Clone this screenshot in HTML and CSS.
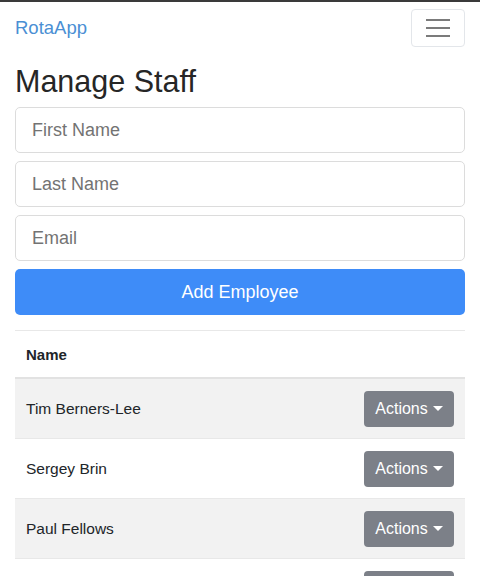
FILE: index.html
```html
<!DOCTYPE html>
<html lang="en">
<head>
<meta charset="utf-8">
<title>RotaApp</title>
<link rel="stylesheet" href="styles.css">
</head>
<body>
<nav class="navbar">
  <a class="brand" href="#">RotaApp</a>
  <button class="toggler" type="button" aria-label="Toggle navigation">
    <svg width="26" height="20" viewBox="0 0 26 20"><g stroke="#7b7b7b" stroke-width="2"><line x1="1" y1="2" x2="25" y2="2"/><line x1="1" y1="10" x2="25" y2="10"/><line x1="1" y1="18" x2="25" y2="18"/></g></svg>
  </button>
</nav>
<main class="container">
  <h1 class="title">Manage Staff</h1>
  <form class="form">
    <input class="field" type="text" placeholder="First Name">
    <input class="field" type="text" placeholder="Last Name">
    <input class="field" type="email" placeholder="Email">
    <button class="btn-primary" type="button">Add Employee</button>
  </form>
  <table class="table">
    <thead>
      <tr><th>Name</th><th></th></tr>
    </thead>
    <tbody>
      <tr class="odd"><td>Tim Berners-Lee</td><td class="act"><button class="btn-actions" type="button">Actions<span class="caret"></span></button></td></tr>
      <tr><td>Sergey Brin</td><td class="act"><button class="btn-actions" type="button">Actions<span class="caret"></span></button></td></tr>
      <tr class="odd"><td>Paul Fellows</td><td class="act"><button class="btn-actions" type="button">Actions<span class="caret"></span></button></td></tr>
      <tr><td>Larry Page</td><td class="act"><button class="btn-actions" type="button">Actions<span class="caret"></span></button></td></tr>
    </tbody>
  </table>
</main>
</body>
</html>
```
FILE: styles.css
```css
html, body {
  margin: 0;
  padding: 0;
  background: #fff;
}
body {
  font-family: "Liberation Sans", Arial, sans-serif;
  color: #212529;
  border-top: 2px solid #3a3a3a;
  height: 574px;
  overflow: hidden;
}
.navbar {
  display: flex;
  align-items: center;
  justify-content: space-between;
  padding: 7px 15px 8px 15px;
}
.brand {
  color: #4a8fd4;
  font-size: 18.5px;
  text-decoration: none;
}
.toggler {
  width: 54px;
  height: 38px;
  background: #fff;
  border: 1px solid #e3e6ea;
  border-radius: 4px;
  display: flex;
  align-items: center;
  justify-content: center;
  padding: 0;
}
.container {
  padding: 0 15px;
}
.title {
  font-size: 30.5px;
  font-weight: 400;
  line-height: 36px;
  margin: 8px 0 8px 0;
  color: #262626;
}
.form {
  display: flex;
  flex-direction: column;
  gap: 8px;
}
.field {
  height: 46px;
  box-sizing: border-box;
  border: 1px solid #dcdcdc;
  border-radius: 5px;
  padding: 0 16px;
  font-family: inherit;
  font-size: 18px;
  color: #495057;
  background: #fff;
  margin: 0;
}
.field::placeholder {
  color: #737373;
}
.btn-primary {
  height: 46px;
  border: none;
  border-radius: 5px;
  background: #3e8cf8;
  color: #fff;
  font-family: inherit;
  font-size: 18px;
  margin: 0;
}
.table {
  width: 100%;
  border-collapse: collapse;
  margin-top: 15px;
  font-size: 15.5px;
}
.table th, .table td {
  padding: 0 11px;
  text-align: left;
  border-top: 1px solid #e8e8e8;
}
.table th {
  height: 46px;
  font-weight: 700;
  border-bottom: 2px solid #e2e2e2;
  font-size: 15px;
}
.table td {
  height: 59px;
}
.table tr.odd td {
  background: #f2f2f2;
}
.act {
  text-align: right !important;
}
.btn-actions {
  height: 36px;
  width: 90px;
  border: none;
  border-radius: 4px;
  background: #7c8088;
  color: #fff;
  font-family: inherit;
  font-size: 16px;
  padding: 0;
  display: inline-flex;
  align-items: center;
  justify-content: center;
}
.caret {
  display: inline-block;
  margin-left: 5px;
  width: 0;
  height: 0;
  border-left: 5px solid transparent;
  border-right: 5px solid transparent;
  border-top: 5px solid #fff;
}
```
